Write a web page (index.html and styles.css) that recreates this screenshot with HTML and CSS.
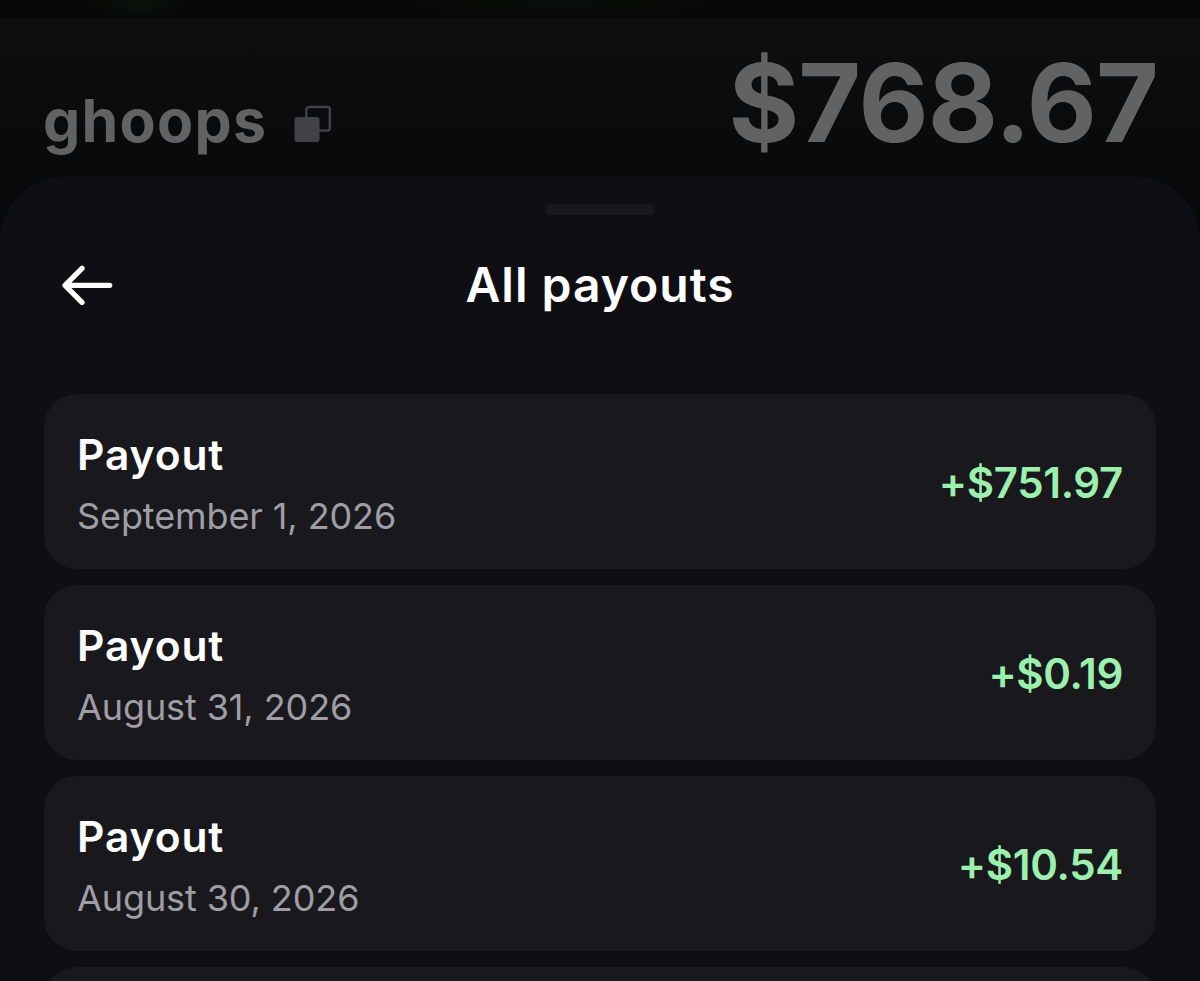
FILE: index.html
```
<!DOCTYPE html>
<html lang="en">
<head>
    <meta charset="UTF-8">
    <meta name="viewport" content="width=device-width, initial-scale=1.0">
    <title>All payouts</title>
    <link rel="stylesheet" href="styles.css">
</head>
<body>
    <div class="topbar"></div>
    <header class="account">
        <div class="user">
            <span class="username">ghoops</span>
            <svg class="copy-icon" width="38" height="37" viewBox="0 0 38 37">
                <rect x="12.3" y="2" width="23.5" height="23.5" rx="2.5" fill="none" stroke="#424146" stroke-width="2.4"/>
                <rect x="0.5" y="12" width="25" height="25" rx="3" fill="#424146"/>
            </svg>
        </div>
        <span class="balance">$768.67</span>
    </header>
    <main class="sheet">
        <div class="handle"></div>
        <div class="sheet-header">
            <svg class="back" width="52" height="42" viewBox="0 0 52 42">
                <path d="M20 4.3 L3 21.3 L20 38.3 M3.5 21.3 H47.7" fill="none" stroke="#fff" stroke-width="5.3" stroke-linecap="round" stroke-linejoin="round"/>
            </svg>
            <h1>All payouts</h1>
        </div>
        <div class="payouts">
            <div class="payout">
                <div class="info">
                    <p class="name">Payout</p>
                    <p class="date">September 1, 2026</p>
                </div>
                <span class="amount">+$751.97</span>
            </div>
            <div class="payout">
                <div class="info">
                    <p class="name">Payout</p>
                    <p class="date">August 31, 2026</p>
                </div>
                <span class="amount">+$0.19</span>
            </div>
            <div class="payout">
                <div class="info">
                    <p class="name">Payout</p>
                    <p class="date">August 30, 2026</p>
                </div>
                <span class="amount">+$10.54</span>
            </div>
            <div class="payout"></div>
        </div>
    </main>
</body>
</html>
```
FILE: styles.css
```
* {
    box-sizing: border-box;
}
body {
    margin: 0;
    height: 981px;
    overflow: hidden;
    display: flex;
    flex-direction: column;
    background: linear-gradient(#0e0f10 18px, #08090a 176px);
    font-family: Inter, "Liberation Sans", sans-serif;
    color: #fff;
}
.topbar {
    height: 18px;
    flex-shrink: 0;
    background: radial-gradient(ellipse 55px 20px at 140px 0, #0a140a, transparent), radial-gradient(ellipse 200px 26px at 560px 0, #080e09, transparent), #070808;
    border-bottom: 1px solid #030404;
}
.account {
    height: 158px;
    flex-shrink: 0;
    display: flex;
    justify-content: space-between;
    align-items: baseline;
    padding: 20px 42px 0 43px;
    color: #636262;
    font-weight: 700;
}
.user {
    display: flex;
    align-items: baseline;
    gap: 27px;
}
.username {
    font-size: 59px;
    line-height: 70px;
    letter-spacing: 1.3px;
}
.copy-icon {
    display: block;
}
.balance {
    font-size: 108px;
    line-height: 130px;
    letter-spacing: -0.9px;
}
.sheet {
    flex: 1;
    padding: 28px 44px 0;
    background-color: #0f0e13;
    border-radius: 66px 66px 0 0;
    overflow: hidden;
}
.handle {
    width: 110px;
    height: 11px;
    margin: 0 auto;
    border-radius: 6px;
    background-color: #19181c;
}
.sheet-header {
    display: grid;
    grid-template-columns: 52px 1fr 52px;
    align-items: center;
    height: 60px;
    margin: 40px 18px 79px;
}
h1 {
    margin: 0;
    font-size: 48px;
    line-height: 60px;
    font-weight: 600;
    text-align: center;
    letter-spacing: 1px;
}
.payouts {
    display: flex;
    flex-direction: column;
    gap: 16.5px;
}
.payout {
    height: 174.5px;
    flex-shrink: 0;
    display: flex;
    justify-content: space-between;
    align-items: center;
    padding: 5px 33px 0;
    border-radius: 33px;
    background-color: #19181c;
}
.name, .date {
    margin: 0;
}
.name {
    font-size: 42.5px;
    line-height: 50px;
    font-weight: 600;
    letter-spacing: 0.9px;
}
.date {
    margin-top: 14px;
    font-size: 36px;
    line-height: 44px;
    letter-spacing: -0.1px;
    color: #9f9da5;
}
.amount {
    padding-bottom: 2px;
    font-size: 42px;
    line-height: 50px;
    font-weight: 600;
    letter-spacing: -0.3px;
    color: #9cf0ae;
}
```
